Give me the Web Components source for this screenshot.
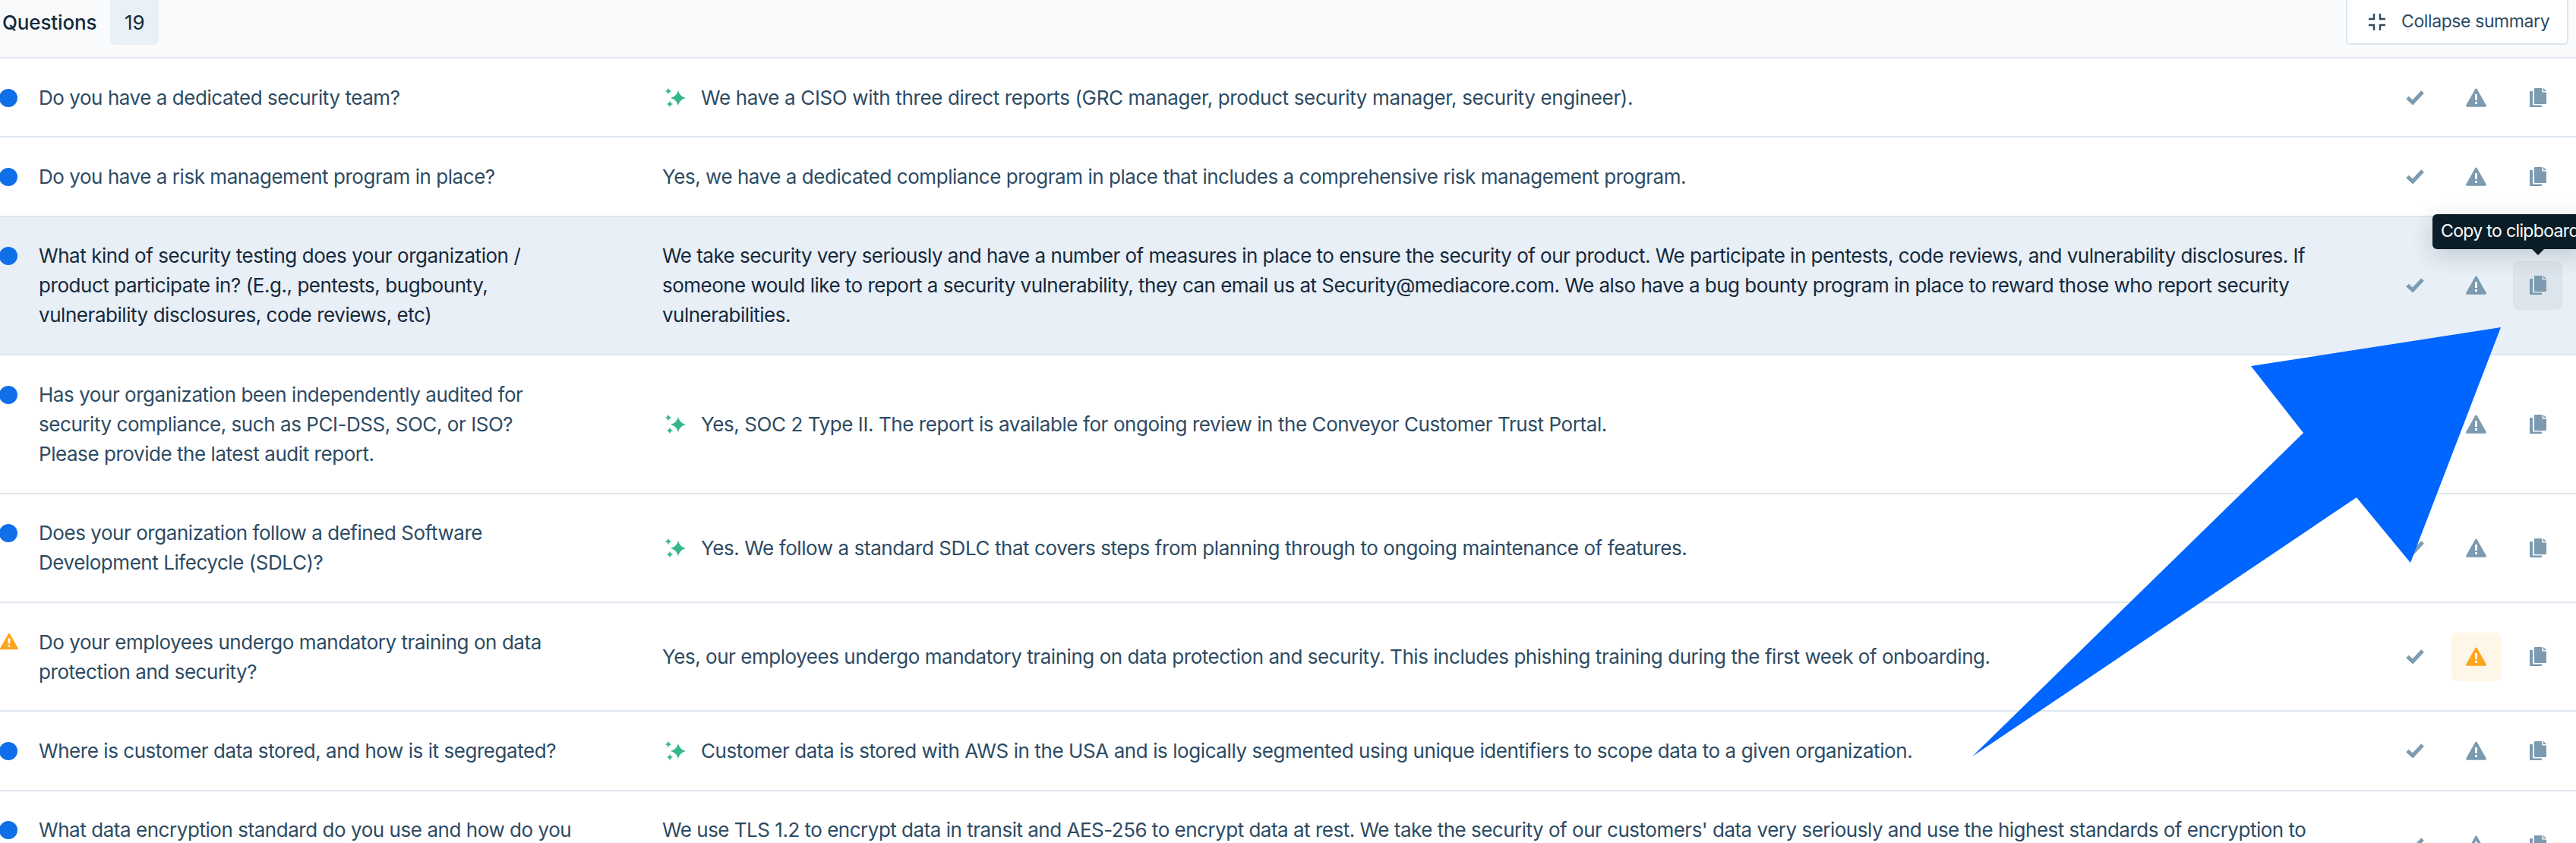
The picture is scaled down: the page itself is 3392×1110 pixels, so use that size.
<!DOCTYPE html>
<html>
<head>
<meta charset="utf-8">
<style>
  html, body { margin: 0; padding: 0; background: #fff; }
  body {
    position: relative;
    width: 3392px;
    height: 1110px;
    overflow: hidden;
    font-family: "Inter", "Liberation Sans", sans-serif;
    font-size: 26px;
    line-height: 39px;
    letter-spacing: -0.45px;
    color: #2d4b63;
  }
</style>
</head>
<body>
<q-header count="19"></q-header>
<q-row status="new" sparkle style="--ans-ls:-0.36px">
  <span slot="question">Do you have a dedicated security team?</span>
  We have a CISO with three direct reports (GRC manager, product security manager, security engineer).
</q-row>
<q-row status="new" style="--ans-ls:-0.46px">
  <span slot="question">Do you have a risk management program in place?</span>
  Yes, we have a dedicated compliance program in place that includes a comprehensive risk management program.
</q-row>
<q-row status="new" selected hover="copy" tooltip="Copy to clipboard" style="--ans-ls:-0.52px">
  <span slot="question">What kind of security testing does your organization / product participate in? (E.g., pentests, bugbounty, vulnerability disclosures, code reviews, etc)</span>
  We take security very seriously and have a number of measures in place to ensure the security of our product. We participate in pentests, code reviews, and vulnerability disclosures. If someone would like to report a security vulnerability, they can email us at Security@mediacore.com. We also have a bug bounty program in place to reward those who report security vulnerabilities.
</q-row>
<q-row status="new" sparkle>
  <span slot="question">Has your organization been independently audited for security compliance, such as PCI-DSS, SOC, or ISO? Please provide the latest audit report.</span>
  Yes, SOC 2 Type II. The report is available for ongoing review in the Conveyor Customer Trust Portal.
</q-row>
<q-row status="new" sparkle>
  <span slot="question">Does your organization follow a defined Software Development Lifecycle (SDLC)?</span>
  Yes. We follow a standard SDLC that covers steps from planning through to ongoing maintenance of features.
</q-row>
<q-row status="warn" flagged style="--ans-ls:-0.46px">
  <span slot="question">Do your employees undergo mandatory training on data protection and security?</span>
  Yes, our employees undergo mandatory training on data protection and security. This includes phishing training during the first week of onboarding.
</q-row>
<q-row status="new" sparkle>
  <span slot="question">Where is customer data stored, and how is it segregated?</span>
  Customer data is stored with AWS in the USA and is logically segmented using unique identifiers to scope data to a given organization.
</q-row>
<q-row status="new" style="--ans-ls:-0.5px">
  <span slot="question">What data encryption standard do you use and how do you protect data at rest and in transit?</span>
  We use TLS 1.2 to encrypt data in transit and AES-256 to encrypt data at rest. We take the security of our customers' data very seriously and use the highest standards of encryption to protect it at all times.
</q-row>
<big-arrow></big-arrow>

<script>
const WARN_PATH = "M13.5 0.6c.5 0 .9.3 1.2.7l12 21.2c.5 1-.1 2.2-1.2 2.2H1.5c-1.1 0-1.7-1.2-1.2-2.2l12-21.2c.3-.4.7-.7 1.2-.7z";

class QHeader extends HTMLElement {
  constructor() {
    super();
    this.attachShadow({ mode: "open" });
  }
  connectedCallback() {
    this.shadowRoot.innerHTML = `
      <style>
        :host {
          display: flex;
          align-items: flex-start;
          justify-content: space-between;
          height: 77px;
          box-sizing: border-box;
          border-bottom: 2px solid #dfe6ef;
          background: #f8fafc;
          padding: 0 10px 0 3px;
          overflow: hidden;
          color: #15293b;
          letter-spacing: -0.15px;
        }
        .left { display: flex; align-items: center; gap: 18px; height: 59px; font-weight: 500; }
        .count {
          background: #e9f0f6;
          border-radius: 0 0 6px 6px;
          width: 64px;
          height: 59px;
          display: flex;
          align-items: center;
          justify-content: center;
          font-weight: 400;
        }
        .collapse {
          display: flex;
          align-items: center;
          gap: 21px;
          width: 293px;
          height: 59px;
          box-sizing: border-box;
          padding-left: 28px;
          background: #fff;
          border: 2px solid #dfe5ec;
          border-top: none;
          border-radius: 0 0 6px 6px;
          color: #2d4b63;
          font-size: 23px;
          letter-spacing: -0.4px;
        }
      </style>
      <div class="left"><span>Questions</span><span class="count">${this.getAttribute("count")}</span></div>
      <div class="collapse">
        <svg width="22" height="22" viewBox="0 0 22 22" fill="none" stroke="#2d4b63" stroke-width="2.4">
          <path d="M7 0v7H0M15 0v7h7M7 22v-7H0M15 22v-7h7"/>
        </svg>
        <span>Collapse summary</span>
      </div>`;
  }
}

class QStatus extends HTMLElement {
  constructor() {
    super();
    this.attachShadow({ mode: "open" });
  }
  connectedCallback() {
    const warn = this.getAttribute("kind") === "warn";
    this.shadowRoot.innerHTML = `
      <style>
        :host { display: block; width: 51px; height: 39px; flex: none; }
        .dot { width: 24px; height: 24px; margin: 8px 0 0 -1px; border-radius: 50%; background: #0f6fe8; }
        svg { display: block; margin-top: 6px; }
      </style>
      ${warn
        ? `<svg width="24" height="25" viewBox="0 0 27 25"><path fill="#fca61f" d="${WARN_PATH}"/><path fill="#fff" d="M12 8h3v8h-3zM12 18h3v3h-3z"/></svg>`
        : `<div class="dot"></div>`}`;
  }
}

class QActions extends HTMLElement {
  constructor() {
    super();
    this.attachShadow({ mode: "open" });
  }
  connectedCallback() {
    const hover = this.getAttribute("hover");
    const flagged = this.hasAttribute("flagged");
    const tip = this.getAttribute("tooltip");
    this.shadowRoot.innerHTML = `
      <style>
        :host { display: flex; gap: 16px; align-items: center; flex: none; padding: 19.2px 0; letter-spacing: -0.65px; }
        .btn {
          position: relative;
          width: 65px;
          height: 64px;
          border-radius: 8px;
          display: flex;
          align-items: center;
          justify-content: center;
        }
        .hover { background: #dde5ec; }
        .flag { background: #fef6e7; }
        .tip {
          position: absolute;
          left: -106px;
          top: -62px;
          height: 46px;
          padding: 0 11px;
          display: flex;
          align-items: center;
          white-space: nowrap;
          background: #0b1d26;
          color: #fff;
          border-radius: 6px;
          font-size: 23px;
          box-shadow: 0 8px 30px rgba(30, 50, 70, 0.2);
        }
        .tip::after {
          content: "";
          position: absolute;
          left: 131px;
          top: 46px;
          border: 8px solid transparent;
          border-top-color: #0b1d26;
          border-bottom: none;
        }
      </style>
      <div class="btn">
        <svg width="24" height="19" viewBox="0 0 24 19"><path fill="none" stroke="#7c9ab0" stroke-width="5" d="M2 9.500l7 6.500L22 2"/></svg>
      </div>
      <div class="btn ${flagged ? "flag" : ""}">
        <svg width="27" height="25" viewBox="0 0 27 25"><path fill="${flagged ? "#fca61f" : "#7c9ab0"}" d="${WARN_PATH}"/><path fill="#fff" d="M12 8h3v8h-3zM12 18h3v3h-3z"/></svg>
      </div>
      <div class="btn ${hover === "copy" ? "hover" : ""}">
        <svg width="22" height="25" viewBox="0 0 22 25" fill="#7c9ab0">
          <path d="M7 0h9.500v5.500H22V20a1 1 0 0 1-1 1H7a1 1 0 0 1-1-1V1a1 1 0 0 1 1-1z"/>
          <path d="M18 0l4 4h-4z"/>
          <path d="M4 4H1a1 1 0 0 0-1 1v19a1 1 0 0 0 1 1h14a1 1 0 0 0 1-1v-1.500H5a1 1 0 0 1-1-1z"/>
        </svg>
        ${tip ? `<div class="tip">${tip}</div>` : ""}
      </div>`;
  }
}

class QRow extends HTMLElement {
  constructor() {
    super();
    this.attachShadow({ mode: "open" });
  }
  connectedCallback() {
    const selected = this.hasAttribute("selected");
    const attrs = [];
    if (this.hasAttribute("hover")) attrs.push(`hover="${this.getAttribute("hover")}"`);
    if (this.hasAttribute("tooltip")) attrs.push(`tooltip="${this.getAttribute("tooltip")}"`);
    if (this.hasAttribute("flagged")) attrs.push("flagged");
    this.shadowRoot.innerHTML = `
      <style>
        :host {
          display: flex;
          align-items: center;
          box-sizing: border-box;
          padding-right: 18px;
          border-bottom: 2px solid #dfe6ef;
          ${selected ? "background: #e8eff6; color: #15293b;" : ""}
        }
        .q {
          display: flex;
          align-items: flex-start;
          width: 872px;
          flex: none;
          padding: 31.7px 116px 31.7px 0;
          box-sizing: border-box;
        }
        .a {
          flex: 1;
          display: flex;
          align-items: flex-start;
          padding: 31.7px 100px 31.7px 0;
          letter-spacing: var(--ans-ls, -0.42px);
        }
        svg.spark { flex: none; margin: 6px 18px 0 3px; }
      </style>
      <div class="q"><q-status kind="${this.getAttribute("status")}"></q-status><div><slot name="question"></slot></div></div>
      <div class="a">
        ${this.hasAttribute("sparkle") ? `<svg class="spark" width="30" height="28" viewBox="0 0 30 28" fill="#34b78f">
          <path d="M18 3.500C19 9 22.500 12.500 28 14 22.500 15.500 19 19 18 24.500 17 19 13.500 15.500 8 14 13.500 12.500 17 9 18 3.500z"/>
          <path d="M5 .5C5.500 3 7 4.500 9.500 5 7 5.500 5.500 7 5 9.500 4.500 7 3 5.500 .5 5 3 4.500 4.500 3 5 .5z"/>
          <path d="M7 17.500C7.500 20 9 21.500 11.500 22 9 22.500 7.500 24 7 26.500 6.500 24 5 22.500 2.500 22 5 21.500 6.500 20 7 17.500z"/>
        </svg>` : ""}
        <div><slot></slot></div>
      </div>
      <q-actions ${attrs.join(" ")}></q-actions>`;
  }
}

class BigArrow extends HTMLElement {
  constructor() {
    super();
    this.attachShadow({ mode: "open" });
  }
  connectedCallback() {
    this.shadowRoot.innerHTML = `
      <style>
        :host { position: absolute; left: 0; top: 0; pointer-events: none; }
        svg { display: block; }
      </style>
      <svg width="3392" height="1110" viewBox="0 0 3392 1110">
        <polygon fill="#0066ff" points="3293,431 2964,482 3033,570 2597,996 3103,655 3174,741"/>
      </svg>`;
  }
}

customElements.define("q-header", QHeader);
customElements.define("q-status", QStatus);
customElements.define("q-actions", QActions);
customElements.define("q-row", QRow);
customElements.define("big-arrow", BigArrow);
</script>
</body>
</html>
